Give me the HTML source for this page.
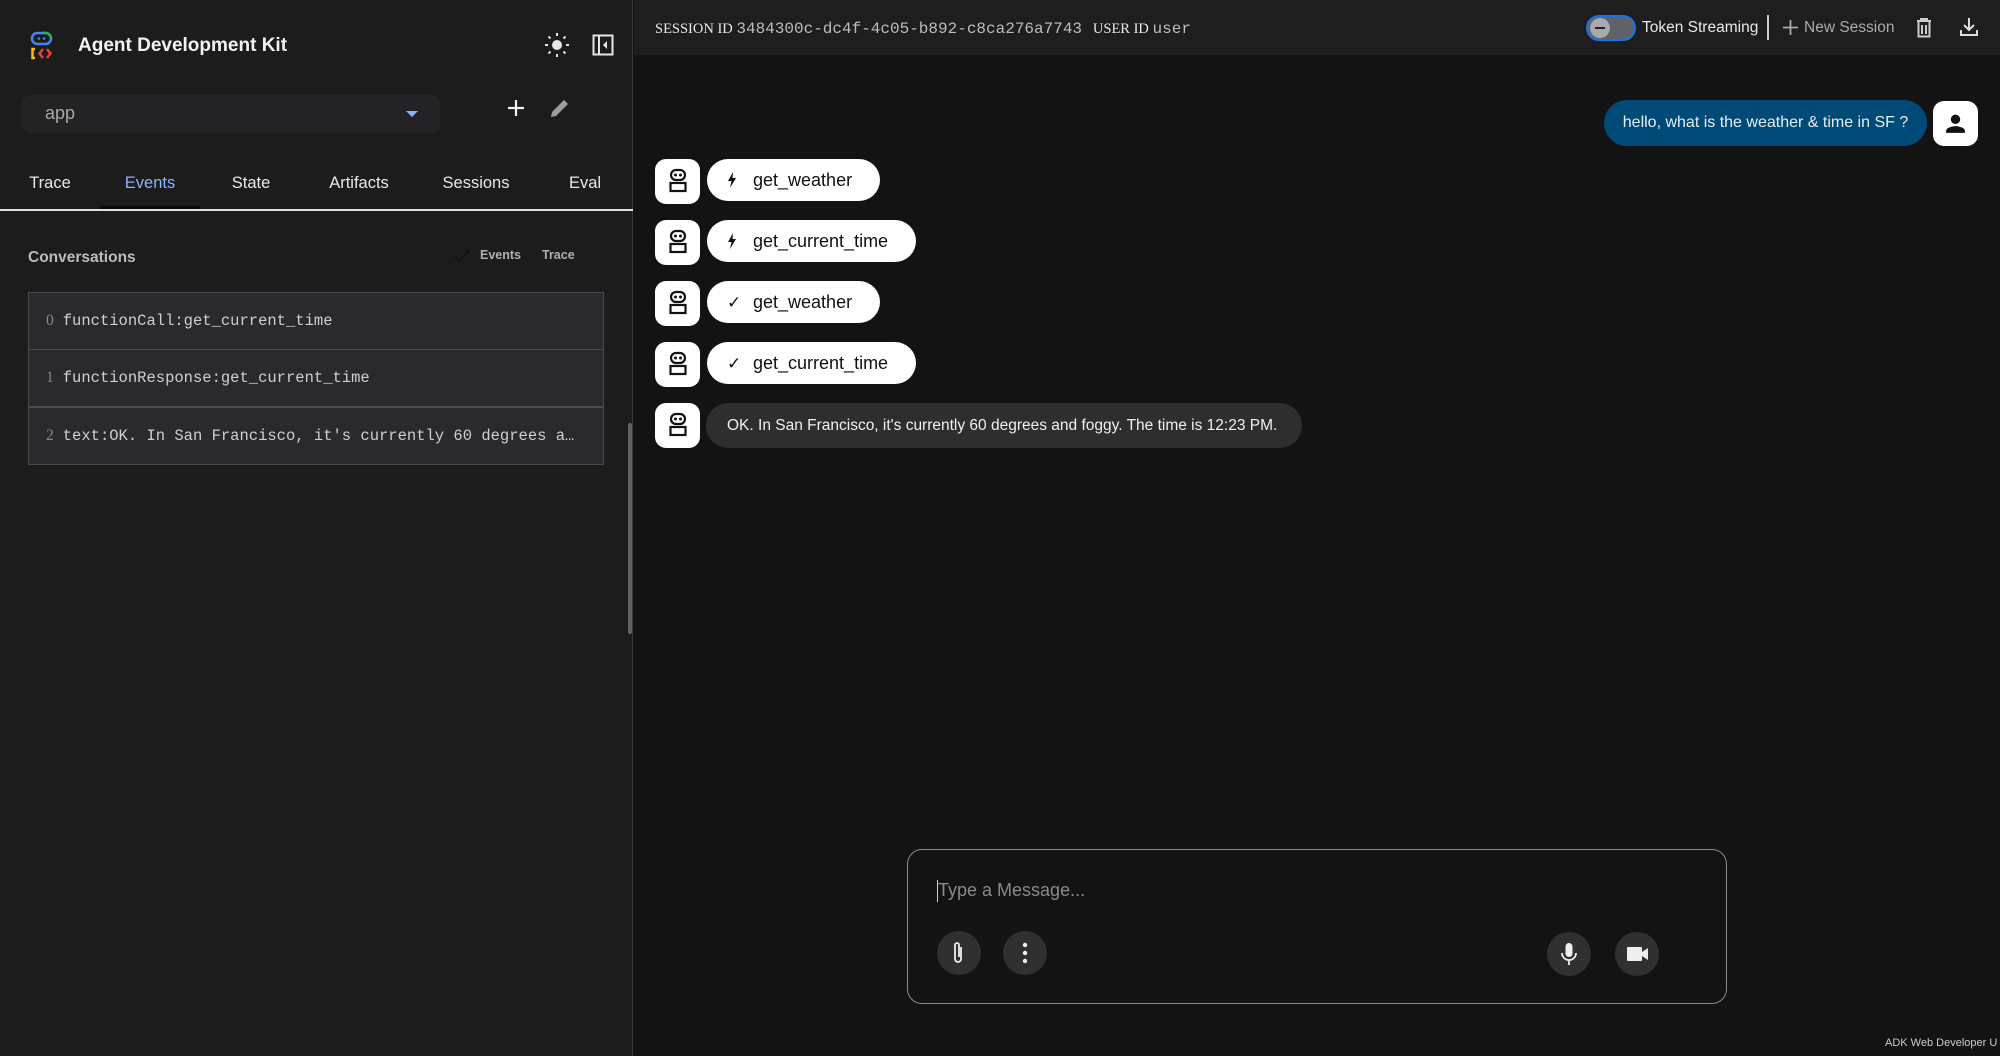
<!DOCTYPE html>
<html><head><meta charset="utf-8"><style>
*{margin:0;padding:0;box-sizing:border-box}
body{width:2000px;height:1056px;background:#131313;font-family:"Liberation Sans",sans-serif;position:relative;overflow:hidden;color:#e3e3e3}
.a{position:absolute}
.left{left:0;top:0;width:633px;height:1056px;background:#1c1c1d;border-right:1px solid #3a3a3a}
.tab{position:absolute;top:174px;font-size:16.5px;color:#e8e8e8;transform:translateX(-50%)}
.row{position:absolute;left:28px;width:576px;height:58px;background:#2a2a2e;border:1.5px solid #4a4b50;font-family:"Liberation Mono",monospace;font-size:15.5px;color:#cfcfcf;padding:19px 0 0 17px;white-space:nowrap}
.row b{font-weight:normal;color:#888;margin-right:9px;font-family:"Liberation Serif",serif}
.av{position:absolute;left:655px;width:45px;height:45px;background:#fff;border-radius:11px}
.pill{position:absolute;left:707px;height:42px;background:#fff;border-radius:21px;color:#111;font-size:18px;line-height:42px;padding-left:20px}
.pill span{display:inline-block;width:26px;font-size:17px}
.pill svg{vertical-align:-2px}
.cb{position:absolute;width:44px;height:44px;border-radius:50%;background:#303030}
</style></head><body>
<div class="a left">
 <svg class="a" style="left:30px;top:31px" width="34" height="30" viewBox="0 0 34 30">
  <rect x="2" y="2" width="19" height="11" rx="5.5" fill="none" stroke="#4285f4" stroke-width="2.5"/>
  <path d="M13 2h3a5.5 5.5 0 0 1 5 5" fill="none" stroke="#34a853" stroke-width="2.5"/>
  <circle cx="9" cy="7.5" r="1.3" fill="#4285f4"/><circle cx="14" cy="7.5" r="1.3" fill="#4285f4"/>
  <path d="M5 18h-2.5v9h2.5" fill="none" stroke="#fbbc04" stroke-width="2.5"/>
  <path d="M13 18l-3.5 4.5 3.5 4.5M17 18l3.5 4.5-3.5 4.5" fill="none" stroke="#ea4335" stroke-width="2.5"/>
 </svg>
 <div class="a" style="left:78px;top:35px;font-size:19px;font-weight:bold;color:#f2f2f2">Agent Development Kit</div>
 <svg class="a" style="left:544px;top:32px" width="26" height="26" viewBox="0 0 26 26" fill="#e6e6e6"><circle cx="13" cy="13" r="5"/><g stroke="#e6e6e6" stroke-width="2"><path d="M13 1v3M13 22v3M1 13h3M22 13h3M4.5 4.5l2 2M19.5 19.5l2 2M4.5 21.5l2-2M19.5 6.5l2-2"/></g></svg>
 <svg class="a" style="left:592px;top:34px" width="22" height="22" viewBox="0 0 22 22"><rect x="1.5" y="1.5" width="19" height="19" fill="none" stroke="#e6e6e6" stroke-width="2"/><path d="M7 2v18" stroke="#e6e6e6" stroke-width="2"/><path d="M15 7l-4 4 4 4z" fill="#e6e6e6"/></svg>
 <div class="a" style="left:22px;top:95px;width:418px;height:39px;background:#232325;border-radius:10px"></div>
 <div class="a" style="left:45px;top:103px;font-size:18px;color:#a8a8a8">app</div>
 <div class="a" style="left:406px;top:111px;width:0;height:0;border-left:6px solid transparent;border-right:6px solid transparent;border-top:6px solid #8ab4f8"></div>
 <svg class="a" style="left:506px;top:98px" width="20" height="20"><path d="M10 2v16M2 10h16" stroke="#f0f0f0" stroke-width="2.2"/></svg>
 <svg class="a" style="left:549px;top:97px" width="22" height="22" viewBox="0 0 22 22"><path d="M2 20l1-5L15 3l4 4L7 19z" fill="#9e9e9e"/></svg>
 <div class="tab" style="left:50px">Trace</div>
 <div class="tab" style="left:150px;color:#8ab4f8">Events</div>
 <div class="tab" style="left:251px">State</div>
 <div class="tab" style="left:359px">Artifacts</div>
 <div class="tab" style="left:476px">Sessions</div>
 <div class="tab" style="left:585px">Eval</div>
 <div class="a" style="left:0;top:209px;width:633px;height:1.5px;background:#e0e0e0"></div>
 <div class="a" style="left:100px;top:206px;width:100px;height:3px;background:#0a0a0a"></div>
 <div class="a" style="left:28px;top:249px;font-size:15.5px;font-weight:bold;color:#bdbdbd">Conversations</div>
 <svg class="a" style="left:454px;top:249px" width="16" height="14"><path d="M1 7l4 5 10-11" fill="none" stroke="#111" stroke-width="1.8"/></svg>
 <div class="a" style="left:480px;top:248px;font-size:12.5px;font-weight:bold;color:#b0b0b0">Events</div>
 <div class="a" style="left:542px;top:248px;font-size:12.5px;font-weight:bold;color:#b0b0b0">Trace</div>
 <div class="row" style="top:292px"><b>0</b>functionCall:get_current_time</div>
 <div class="row" style="top:349px"><b>1</b>functionResponse:get_current_time</div>
 <div class="row" style="top:407px"><b>2</b>text:OK. In San Francisco, it's currently 60 degrees a…</div>
 <div class="a" style="left:628px;top:423px;width:4px;height:211px;background:#5f6368;border-radius:2px"></div>
</div>
<div class="a" style="left:634px;top:0;width:1366px;height:55px;background:#1e1e1e"></div>
<div class="a" style="left:655px;top:20px;font-family:'Liberation Serif',serif;font-size:14.5px;color:#e8e8e8">SESSION ID <span style="font-family:'Liberation Mono',monospace;font-size:16px;color:#bdbdbd">3484300c-dc4f-4c05-b892-c8ca276a7743</span>&nbsp;&nbsp; USER ID <span style="font-family:'Liberation Mono',monospace;font-size:16px;color:#bdbdbd">user</span></div>
<div class="a" style="left:1586px;top:15px;width:50px;height:26px;border-radius:13px;background:#5f6368;border:2px solid #1a73e8"></div>
<div class="a" style="left:1590px;top:18px;width:20px;height:20px;border-radius:50%;background:#a8a8ad"></div>
<div class="a" style="left:1595px;top:27px;width:10px;height:2px;background:#222"></div>
<div class="a" style="left:1642px;top:19px;font-size:15.5px;color:#e8e8e8">Token Streaming</div>
<div class="a" style="left:1767px;top:15px;width:2px;height:25px;background:#ccc"></div>
<svg class="a" style="left:1782px;top:19px" width="17" height="17"><path d="M8.5 1v15M1 8.5h15" stroke="#aaa" stroke-width="1.8"/></svg>
<div class="a" style="left:1804px;top:19px;font-size:15.5px;color:#aaa">New Session</div>
<svg class="a" style="left:1915px;top:17px" width="18" height="21" viewBox="0 0 18 21"><path d="M2 4h14M6 4V2h6v2M3.5 4.5v15h11v-15M7 8v9M11 8v9" fill="none" stroke="#ccc" stroke-width="2"/></svg>
<svg class="a" style="left:1959px;top:17px" width="20" height="20" viewBox="0 0 20 20"><path d="M10 1v11M5 8l5 5 5-5M2 13v5h16v-5" fill="none" stroke="#ddd" stroke-width="2"/></svg>
<div class="a" style="left:1604px;top:100px;width:323px;height:46px;border-radius:23px;background:#004a77;color:#e8eef4;font-size:16px;line-height:46px;text-align:center">hello, what is the weather &amp; time in SF ?</div>
<div class="a" style="left:1933px;top:101px;width:45px;height:45px;background:#fff;border-radius:11px"></div>
<svg class="a" style="left:1943px;top:111px" width="25" height="25" viewBox="0 0 24 24"><circle cx="12" cy="8" r="4.5" fill="#111"/><path d="M3 21v-2c0-3 6-4.5 9-4.5s9 1.5 9 4.5v2z" fill="#111"/></svg>
<div class="av" style="top:159px"></div><div class="av" style="top:220px"></div><div class="av" style="top:281px"></div><div class="av" style="top:342px"></div><div class="av" style="top:403px"></div>
<svg class="a" style="left:655px;top:159px" width="45" height="290">
 <defs><g id="r"><rect x="16" y="11" width="14" height="10" rx="5" fill="none" stroke="#111" stroke-width="2.2"/><circle cx="20.5" cy="16" r="1.5" fill="#111"/><circle cx="25.5" cy="16" r="1.5" fill="#111"/><rect x="15.5" y="24" width="15" height="8" fill="none" stroke="#111" stroke-width="2.2"/></g></defs>
 <use href="#r" y="0"/><use href="#r" y="61"/><use href="#r" y="122"/><use href="#r" y="183"/><use href="#r" y="244"/>
</svg>
<div class="pill" style="top:159px;width:173px"><span><svg width="10" height="16" viewBox="0 0 10 16"><path d="M6 0L1 9h3.5L3 16l6-10H5.5z" fill="#111"/></svg></span>get_weather</div>
<div class="pill" style="top:220px;width:209px"><span><svg width="10" height="16" viewBox="0 0 10 16"><path d="M6 0L1 9h3.5L3 16l6-10H5.5z" fill="#111"/></svg></span>get_current_time</div>
<div class="pill" style="top:281px;width:173px"><span>✓</span>get_weather</div>
<div class="pill" style="top:342px;width:209px"><span>✓</span>get_current_time</div>
<div class="a" style="left:706px;top:403px;width:596px;height:45px;border-radius:23px;background:#2e2e2e;color:#f0f0f0;font-size:15.5px;line-height:45px;padding-left:21px">OK. In San Francisco, it's currently 60 degrees and foggy. The time is 12:23 PM.</div>
<div class="a" style="left:907px;top:849px;width:820px;height:155px;border:1.5px solid #8a8a8a;border-radius:15px"></div>
<div class="a" style="left:937px;top:880px;width:1px;height:22px;background:#ccc"></div>
<div class="a" style="left:938px;top:880px;font-size:18px;color:#8a8a8a">Type a Message...</div>
<div class="cb" style="left:937px;top:931px"></div><div class="cb" style="left:1003px;top:931px"></div>
<div class="cb" style="left:1547px;top:932px"></div><div class="cb" style="left:1615px;top:932px"></div>
<svg class="a" style="left:950px;top:940px" width="16" height="26" viewBox="0 0 16 26"><path d="M11 7v12a3 3 0 0 1-6 0V5a2 2 0 0 1 4 0v12" fill="none" stroke="#eee" stroke-width="1.8"/></svg>
<svg class="a" style="left:1019px;top:941px" width="12" height="24"><circle cx="6" cy="4" r="2.2" fill="#eee"/><circle cx="6" cy="12" r="2.2" fill="#eee"/><circle cx="6" cy="20" r="2.2" fill="#eee"/></svg>
<svg class="a" style="left:1559px;top:942px" width="20" height="26" viewBox="0 0 20 26"><rect x="6.5" y="1" width="7" height="14" rx="3.5" fill="#eee"/><path d="M3 11a7 7 0 0 0 14 0M10 18v5" fill="none" stroke="#eee" stroke-width="1.8"/></svg>
<svg class="a" style="left:1626px;top:945px" width="24" height="18" viewBox="0 0 24 18"><rect x="1" y="2" width="15" height="14" rx="1" fill="#eee"/><path d="M16 7l6-4v12l-6-4z" fill="#eee"/></svg>
<div class="a" style="left:1885px;top:1037px;font-size:11px;color:#ccc;white-space:nowrap">ADK Web Developer U</div>
</body></html>
